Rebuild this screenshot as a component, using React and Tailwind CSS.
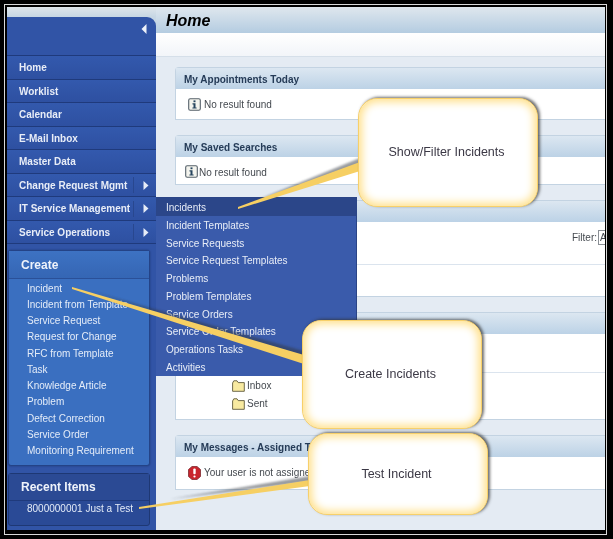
import React from "react";

const Arrow = () => (
  <svg width="6" height="9" viewBox="0 0 6 9" className="block"><path d="M0.5 0 L5.5 4.5 L0.5 9 Z" fill="#e6ecf7" /></svg>
);

const nav = ["Home", "Worklist", "Calendar", "E-Mail Inbox", "Master Data"];
const navSub = ["Change Request Mgmt", "IT Service Management", "Service Operations"];
const create = ["Incident", "Incident from Template", "Service Request", "Request for Change", "RFC from Template", "Task", "Knowledge Article", "Problem", "Defect Correction", "Service Order", "Monitoring Requirement"];
const fly = ["Incident Templates", "Service Requests", "Service Request Templates", "Problems", "Problem Templates", "Service Orders", "Service Order Templates", "Operations Tasks", "Activities"];

const Info = () => (
  <svg width="13" height="13" viewBox="0 0 13 13" className="shrink-0">
    <rect x="0.7" y="0.7" width="11.6" height="11.6" rx="1.5" fill="#f4f4ee" stroke="#55606a" strokeWidth="1.1" />
    <rect x="5.5" y="2.4" width="2" height="1.8" fill="#27455f" />
    <path d="M4.5 5.3 H7.5 V9.4 H8.6 V10.5 H4.4 V9.4 H5.5 V6.4 H4.5 Z" fill="#27455f" />
  </svg>
);

const ErrorIcon = () => (
  <svg width="13" height="14" viewBox="0 0 13 14" className="shrink-0">
    <path d="M4 0.5 H9 L12.5 3.5 V10.5 L9 13.5 H4 L0.5 10.5 V3.5 Z" fill="#c9252d" stroke="#7d2a30" strokeWidth="0.8" />
    <rect x="5.3" y="2.5" width="2.4" height="5.8" rx="1" fill="#fff" />
    <rect x="5.4" y="9.4" width="2.2" height="2.2" rx="1" fill="#fff" />
  </svg>
);

const Folder = () => (
  <svg width="13" height="12" viewBox="0 0 13 12" className="shrink-0">
    <path d="M0.6 3 L1.8 0.8 H5 L6.2 2.6 H12.3 V11.3 H0.6 Z" fill="#f8eaa0" stroke="#5f5a3c" strokeWidth="0.9" />
  </svg>
);

const Card = ({ title, className = "", children }) => (
  <div className={"ml-[19px] border border-r-0 border-[#c3d3e2] rounded-tl-[4px] bg-white " + className}>
    <div className="h-[21px] pl-[8px] pt-[1px] flex items-center bg-gradient-to-b from-[#dce7f1] to-[#bcd2e6] text-[10px] font-bold text-[#253b57] whitespace-nowrap">{title}</div>
    {children}
  </div>
);

const Callout = ({ text, className }) => (
  <div className={"absolute flex items-center justify-center pr-[3px] bg-white rounded-[19px] border border-[#f7d06a] text-[12.5px] text-[#3b3845] shadow-[inset_0_0_8px_3px_#ffe08a,2px_-1px_3px_rgba(50,50,50,0.7)] " + className}>{text}</div>
);

export default function App() {
  return (
    <div className="relative w-[613px] h-[539px] overflow-hidden bg-black pt-[4px] pl-[4px] pr-[6px] pb-[4px] blur-[0.4px] font-['Liberation_Sans',Arial,sans-serif]">
      <div className="h-[531px] border border-[#d8d8d8] p-[2px] pr-0 pb-[3px] bg-black">
        <div className="flex h-[523px] w-[598px] bg-[#e4ebf3] overflow-hidden">
          {/* Sidebar */}
          <div className="w-[149px] shrink-0 pt-[10px] bg-gradient-to-b from-[#dfe5ea] to-[#c6d6e4] to-[10px]">
            <div className="h-[513px] bg-[#3154a6] rounded-tr-[9px] flex flex-col">
              <div className="h-[39px] shrink-0 flex justify-end pt-[7px] pr-[9px] border-b border-[#1f3a7c]">
                <svg width="6" height="10" viewBox="0 0 6 10" className="block"><path d="M5.5 0 L0.5 5 L5.5 10 Z" fill="#eef2fa" /></svg>
              </div>
              {nav.map((n) => (
                <div key={n} className="h-[23.5px] shrink-0 flex items-center pl-[12px] pt-[1px] border-b border-[#1f3a7c] text-[#e8edf7] text-[10px] font-bold bg-gradient-to-b from-[#3359ad] to-[#2e50a1]">{n}</div>
              ))}
              {navSub.map((n) => (
                <div key={n} className="h-[23.5px] shrink-0 flex items-center pl-[12px] pt-[1px] border-b border-[#1f3a7c] text-[#e8edf7] text-[10px] font-bold bg-gradient-to-b from-[#3359ad] to-[#2e50a1]">
                  <span className="w-[114px] whitespace-nowrap">{n}</span>
                  <span className="h-[16px] border-l border-[#28478f] pl-[9px] flex items-center"><Arrow /></span>
                </div>
              ))}
              {/* Create */}
              <div className="ml-px mr-[6px] mt-[6px] h-[216px] shrink-0 rounded-[3px] border border-[#244387] bg-[#3a6fc0] shadow-[0_0_2px_#1d3672]">
                <div className="h-[28px] flex items-center pl-[12px] text-[12px] font-bold text-[#eef3fb] border-b border-[#2a5098] bg-gradient-to-b from-[#3d72c3] to-[#3566b4]">Create</div>
                <div className="pl-[18px] pt-[1px] text-[10px] text-[#e4ecf8] whitespace-nowrap">
                  {create.map((c) => (
                    <div key={c} className="h-[16.25px] flex items-center">{c}</div>
                  ))}
                </div>
              </div>
              {/* Recent */}
              <div className="ml-px mr-[6px] mt-[7px] h-[53px] shrink-0 rounded-[3px] border border-[#1e3874] bg-[#2a4a96]">
                <div className="h-[27px] flex items-center pl-[12px] text-[12px] font-bold text-[#eef3fb] border-b border-[#1f3a7c] bg-[#2b4a94]">Recent Items</div>
                <div className="h-[15px] flex items-center pl-[18px] text-[10px] text-[#e4ecf8] whitespace-nowrap">8000000001 Just a Test</div>
              </div>
            </div>
          </div>

          {/* Main */}
          <div className="flex-1 min-w-0 flex flex-col bg-[#e4ebf3]">
            <div className="h-[26px] shrink-0 bg-gradient-to-b from-[#dfe7ee] to-[#b4cce1] pl-[10px] pt-[4px] text-[16px] leading-[20px] font-bold italic text-black">Home</div>
            <div className="h-[24px] shrink-0 bg-gradient-to-b from-white to-[#f2f5f9] border-b border-[#d5dfe9]"></div>

            <Card title="My Appointments Today" className="mt-[10px] h-[53px]">
              <div className="flex items-center gap-[3px] pl-[12px] pt-[8px] text-[10px] text-[#454a50]"><Info /><span>No result found</span></div>
            </Card>
            <Card title="My Saved Searches" className="mt-[15px] h-[50px]">
              <div className="flex items-center gap-[1px] pl-[9px] pt-[6px] text-[10px] text-[#454a50]"><Info /><span className="pt-[2px]">No result found</span></div>
            </Card>
            <Card title="" className="mt-[15px] h-[97px]">
              <div className="h-[43px] border-b border-[#dbe4ee] flex justify-end items-start pt-[8px] text-[10px] text-[#454a50]">
                <span>Filter:</span>
                <span className="ml-[1px] w-[7px] h-[15px] border border-r-0 border-[#8a8f95] pl-[1px] leading-[13px] overflow-hidden">A</span>
              </div>
            </Card>
            <Card title="" className="mt-[15px] h-[108px]">
              <div className="h-[39px] border-b border-[#dbe4ee]"></div>
              <div className="flex flex-col gap-[3px] pl-[56px] pt-[5px] text-[10px] text-[#454a50]">
                <div className="flex items-center gap-[2px]"><Folder /><span>Inbox</span></div>
                <div className="flex items-center gap-[2px]"><Folder /><span>Sent</span></div>
              </div>
            </Card>
            <Card title="My Messages - Assigned To Me" className="mt-[15px] h-[55px]">
              <div className="flex items-center gap-[3px] pl-[12px] pt-[8px] text-[10px] text-[#454a50] whitespace-nowrap"><ErrorIcon /><span>Your user is not assigned to a business partner</span></div>
            </Card>
          </div>
        </div>
      </div>

      {/* Flyout menu */}
      <div className="absolute left-[156px] top-[197px] w-[201px] h-[179px] bg-[#3a5bab] border-t border-r border-[#2a4486] text-[10px] text-[#e8edf7]">
        <div className="h-[18px] flex items-center pl-[10px] pt-[1px] bg-[#2b4689]">Incidents</div>
        {fly.map((f) => (
          <div key={f} className="h-[17.75px] flex items-center pl-[10px] pt-[1px]">{f}</div>
        ))}
      </div>

      {/* Connectors */}
      <svg className="absolute left-0 top-0" width="613" height="539" viewBox="0 0 613 539">
        <defs>
          <filter id="s" x="-10%" y="-30%" width="120%" height="160%"><feGaussianBlur stdDeviation="1.2" /></filter>
        </defs>
        <g fill="#33373f" opacity="0.5" filter="url(#s)">
          <polygon points="250,203 360,158 360,166" />
          <polygon points="90,291 304,351 304,360" />
          <polygon points="170,499 310,476 310,482" />
        </g>
        <polygon points="238,207 238,209 360,171 360,162" fill="#f6cf63" />
        <polygon points="72,287 72,289 304,364 304,355" fill="#f6cf63" />
        <polygon points="139,507 139,509 310,486 310,480" fill="#f6cf63" />
      </svg>

      <Callout text="Show/Filter Incidents" className="left-[358px] top-[98px] w-[180px] h-[109px]" />
      <Callout text="Create Incidents" className="left-[302px] top-[320px] w-[180px] h-[109px]" />
      <Callout text="Test Incident" className="left-[308px] top-[433px] w-[180px] h-[82px]" />
    </div>
  );
}
